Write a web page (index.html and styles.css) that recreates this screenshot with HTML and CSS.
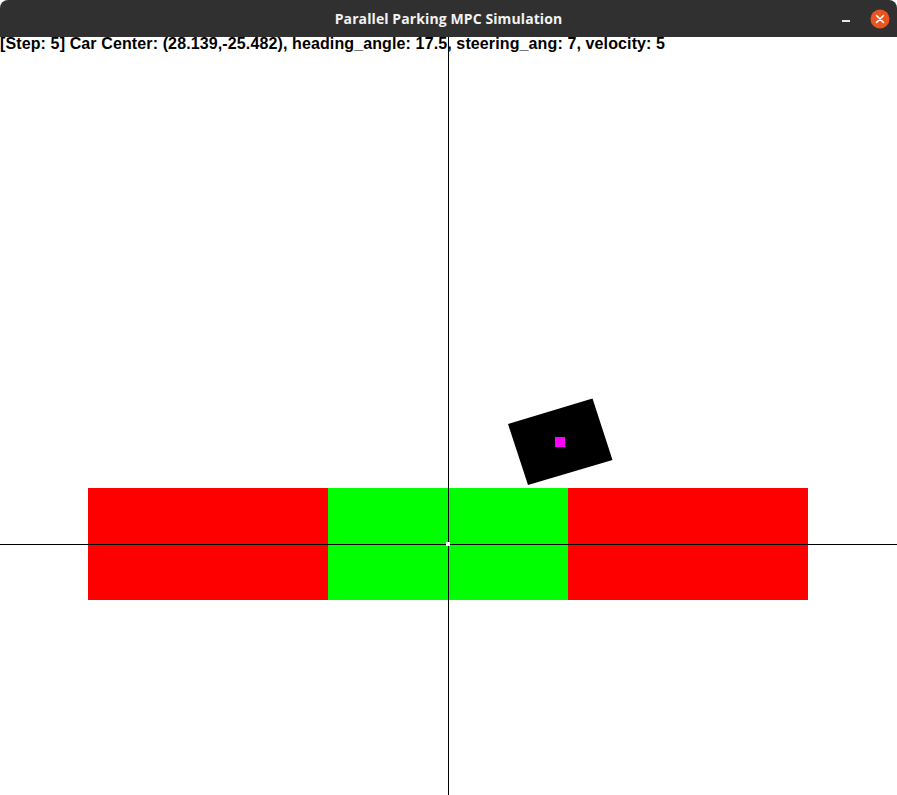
FILE: index.html
```html
<!DOCTYPE html>
<html>
<head>
<meta charset="utf-8">
<link rel="stylesheet" href="styles.css">
</head>
<body>
<div class="window">
  <div class="titlebar">
    <div class="title">Parallel Parking MPC Simulation</div>
    <div class="controls">
      <span class="minimize"></span>
      <span class="close">
        <svg width="20" height="20" viewBox="0 0 20 20">
          <circle cx="10" cy="10" r="9.5" fill="#e95420"/>
          <path d="M6.5 6.5 L13.5 13.5 M13.5 6.5 L6.5 13.5" stroke="#ffffff" stroke-width="1.6" stroke-linecap="round"/>
        </svg>
      </span>
    </div>
  </div>
  <div class="canvas">
    <svg class="scene" width="897" height="758" viewBox="0 37 897 758">
      <rect x="88" y="488" width="240" height="112" fill="#ff0000"/>
      <rect x="328" y="488" width="240" height="112" fill="#00ff00"/>
      <rect x="568" y="488" width="240" height="112" fill="#ff0000"/>
      <polygon points="508,424 592.5,398.5 612.5,460 528,485" fill="#000000"/>
      <rect x="555" y="437" width="10" height="10" fill="#ff00ff"/>
      <line x1="448.5" y1="37" x2="448.5" y2="795" stroke="#000000" stroke-width="1"/>
      <line x1="0" y1="544.5" x2="897" y2="544.5" stroke="#000000" stroke-width="1"/>
      <rect x="446" y="542" width="4" height="4" fill="#ffffff"/>
    </svg>
    <div class="status">[Step: 5] Car Center: (28.139,-25.482), heading_angle: 17.5, steering_ang: 7, velocity: 5</div>
  </div>
</div>
</body>
</html>
```

FILE: styles.css
```css
html, body {
  margin: 0;
  padding: 0;
  background: #ffffff;
}
.window {
  width: 897px;
  height: 795px;
  overflow: hidden;
  background: #ffffff;
}
.titlebar {
  height: 37px;
  background: #313030;
  border-radius: 8px 8px 0 0;
  position: relative;
  display: flex;
  align-items: center;
  justify-content: center;
}
.title {
  font-family: "Open Sans", "DejaVu Sans", sans-serif;
  font-weight: 700;
  font-size: 14px;
  color: #f2f2f2;
  letter-spacing: 0.1px;
}
.controls {
  position: absolute;
  right: 7px;
  top: 9px;
  display: flex;
  align-items: center;
  gap: 20px;
}
.minimize {
  display: block;
  width: 8px;
  height: 1.5px;
  background: #e8e8e8;
  margin-top: 4px;
}
.close {
  display: block;
  width: 20px;
  height: 20px;
}
.close svg {
  display: block;
}
.canvas {
  position: relative;
  height: 758px;
}
.scene {
  position: absolute;
  left: 0;
  top: 0;
  display: block;
}
.status {
  position: absolute;
  left: 0;
  top: -2px;
  font-family: "Liberation Sans", Arial, sans-serif;
  font-weight: 700;
  font-size: 16px;
  letter-spacing: 0.12px;
  color: #000000;
  white-space: nowrap;
}
```
